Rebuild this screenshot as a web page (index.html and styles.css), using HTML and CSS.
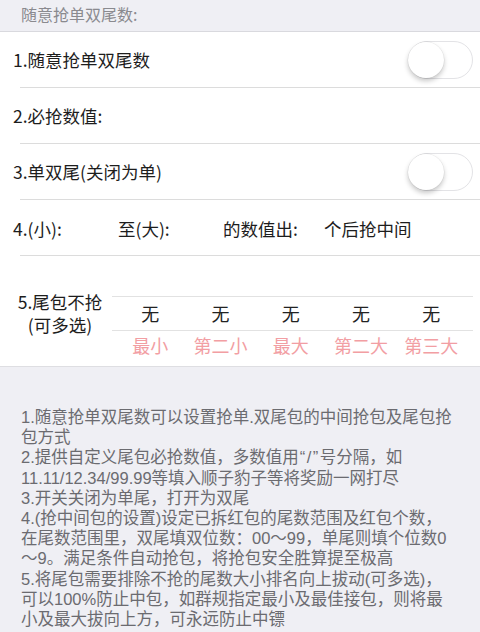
FILE: index.html
```html
<!DOCTYPE html>
<html lang="zh-CN">
<head>
<meta charset="utf-8">
<title>随意抢单双尾数</title>
<link rel="stylesheet" href="styles.css">
</head>
<body>
<div class="page">
  <div class="group-header">随意抢单双尾数:</div>
  <div class="card">
    <div class="row">
      <span class="row-label">1.随意抢单双尾数</span>
      <span class="switch"><span class="knob"></span></span>
    </div>
    <div class="row">
      <span class="row-label">2.必抢数值:</span>
    </div>
    <div class="row">
      <span class="row-label">3.单双尾(关闭为单)</span>
      <span class="switch"><span class="knob"></span></span>
    </div>
    <div class="row row-range">
      <span class="range-cell c1">4.(小):</span>
      <span class="range-cell c2">至(大):</span>
      <span class="range-cell c3">的数值出:</span>
      <span class="range-cell c4">个后抢中间</span>
    </div>
    <div class="picker">
      <div class="picker-label">5.尾包不抢<br>(可多选)</div>
      <div class="wheel">
        <span>无</span><span>无</span><span>无</span><span>无</span><span>无</span>
      </div>
      <div class="wheel-names">
        <span>最小</span><span>第二小</span><span>最大</span><span>第二大</span><span>第三大</span>
      </div>
    </div>
  </div>
  <div class="notes">
    <div class="note-line">1.随意抢单双尾数可以设置抢单.双尾包的中间抢包及尾包抢</div>
    <div class="note-line">包方式</div>
    <div class="note-line">2.提供自定义尾包必抢数值，多数值用<span class="quote">“/”</span>号分隔，如</div>
    <div class="note-line">11.11/12.34/99.99等填入顺子豹子等将奖励一网打尽</div>
    <div class="note-line">3.开关关闭为单尾，打开为双尾</div>
    <div class="note-line">4.(抢中间包的设置)设定已拆红包的尾数范围及红包个数，</div>
    <div class="note-line">在尾数范围里，双尾填双位数：00～99，单尾则填个位数0</div>
    <div class="note-line">～9。满足条件自动抢包，将抢包安全胜算提至极高</div>
    <div class="note-line">5.将尾包需要排除不抢的尾数大小排名向上拔动(可多选)，</div>
    <div class="note-line">可以100%防止中包，如群规指定最小及最佳接包，则将最</div>
    <div class="note-line">小及最大拔向上方，可永远防止中镖</div>
  </div>
</div>
</body>
</html>
```

FILE: styles.css
```css
html, body {
  margin: 0;
  padding: 0;
  background: #efeff4;
}
body {
  font-family: "Noto Sans CJK SC", "Noto Sans", sans-serif;
  color: #1d1d1d;
  width: 480px;
  height: 632px;
  overflow: hidden;
}
.page {
  display: flex;
  flex-direction: column;
}
.group-header {
  height: 32px;
  box-sizing: border-box;
  padding: 0 0 0 21px;
  font-size: 16px;
  line-height: 29px;
  color: #8a8a8f;
  border-bottom: 1px solid #d9d9de;
}
.card {
  background: #ffffff;
  border-bottom: 1px solid #dedee2;
  display: flex;
  flex-direction: column;
}
.row {
  height: 56px;
  box-sizing: border-box;
  display: flex;
  align-items: center;
  justify-content: space-between;
  padding: 0 7px 0 13px;
  position: relative;
  font-size: 17.5px;
}
.row::after {
  content: "";
  position: absolute;
  left: 20px;
  right: 0;
  bottom: 0;
  height: 1px;
  background: #dcdcdc;
}
.row-label {
  line-height: 24px;
}
.switch {
  width: 65px;
  height: 38px;
  box-sizing: border-box;
  border: 1.5px solid #e3e3e6;
  border-radius: 19px;
  background: #ffffff;
  display: flex;
  align-items: center;
}
.knob {
  width: 36px;
  height: 36px;
  border-radius: 50%;
  background: #ffffff;
  margin-left: -1px;
  box-shadow: 0 3px 5px rgba(0,0,0,0.22), 0 0 0 0.5px rgba(0,0,0,0.08);
}
.row-range {
  display: grid;
  grid-template-columns: 105px 105px 101px auto;
  align-items: center;
  justify-content: start;
}
.picker {
  display: grid;
  grid-template-columns: 112px 361px;
  padding-top: 34px;
  padding-bottom: 12px;
}
.picker-label {
  font-size: 17.5px;
  line-height: 23px;
  text-align: center;
  padding-left: 8px;
  align-self: center;
}
.wheel {
  align-self: center;
  height: 35px;
  box-sizing: border-box;
  border-top: 1px solid #e2e2e2;
  border-bottom: 1px solid #e2e2e2;
  display: grid;
  grid-template-columns: repeat(5, 70.3px);
  padding-left: 3px;
  align-items: center;
  font-size: 18px;
  color: #222;
}
.wheel span,
.wheel-names span {
  text-align: center;
}
.wheel-names {
  grid-column: 2;
  display: grid;
  grid-template-columns: repeat(5, 70.3px);
  padding-left: 3px;
  font-size: 18px;
  line-height: 18px;
  color: #f29ea3;
}
.notes {
  padding: 40px 0 0 21px;
  font-family: "Liberation Sans", "Noto Sans CJK SC", sans-serif;
  font-size: 16.5px;
  line-height: 20.2px;
  color: #6b6b70;
}
.note-line {
  white-space: nowrap;
}
.quote {
  letter-spacing: 1.5px;
  padding-left: 1px;
}
```
